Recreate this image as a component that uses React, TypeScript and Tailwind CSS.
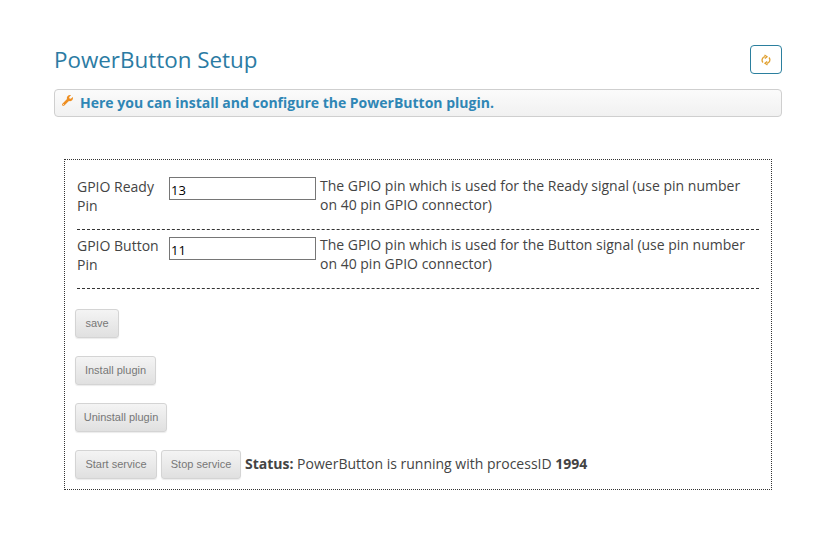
import { FaWrench } from "react-icons/fa";

const btn =
  "h-[29px] rounded-[3px] border border-[#d4d4d4] bg-gradient-to-b from-[#f4f4f4] to-[#e0e0e0] text-center text-[11px] text-[#777] shadow-[0_1px_1px_rgba(0,0,0,0.08)] font-['Liberation_Sans',sans-serif]";

function Row({ label, value, text, first }: { label: string; value: string; text: string; first?: boolean }) {
  return (
    <div className={first ? "flex h-[60px] items-start border-b border-dashed border-[#333] pt-[7px]" : "flex h-[59px] items-start border-b border-dashed border-[#333] pt-[7px]"}>
      <div className={first ? "w-[92px] text-[14px] leading-[19px] text-[#444]" : "-mt-px w-[92px] text-[14px] leading-[19px] text-[#444]"}>{label}</div>
      <input
        readOnly
        value={value}
        className="h-[23px] w-[147px] border border-[#767676] bg-white px-[1px] pt-[2px] text-[13px] text-black outline-none font-['Open_Sans',sans-serif]"
      />
      <div className={first ? "-mt-px ml-[4px] w-[435px] text-[14px] leading-[19px] text-[#444]" : "-mt-[2px] ml-[4px] w-[435px] text-[14px] leading-[19px] text-[#444]"}>{text}</div>
    </div>
  );
}

export default function App() {
  return (
    <div className="h-[539px] w-[838px] bg-white pl-[54px] pr-[56px] pt-[45px] font-['Open_Sans',sans-serif]">
      <div className="flex items-start justify-between">
        <h1 className="text-[22.4px] leading-[30px] text-[#2b7ba3]">PowerButton Setup</h1>
        <button className="flex h-[29px] w-[32px] items-center justify-center rounded-[4px] border border-[#2b7f9e] bg-white">
          <svg viewBox="0 0 12 12" className="h-[12px] w-[12px]" fill="none" stroke="#e0a030" strokeWidth="1.3">
            <path d="M3 8.5 A3.5 3.5 0 0 1 5 2.7" />
            <path d="M4.5 1 L7 2.8 L4.8 4.6" />
            <path d="M9 3.5 A3.5 3.5 0 0 1 7 9.3" />
            <path d="M7.5 11 L5 9.2 L7.2 7.4" />
          </svg>
        </button>
      </div>
      <div className="mt-[14px] flex h-[28px] items-center rounded-[4px] border border-[#cfcfcf] bg-gradient-to-b from-[#fbfbfb] to-[#f1f1f1] pb-[1px] pl-[7px]">
        <FaWrench className="mb-[4px] h-[11px] w-[11px] text-[#ee8f22]" />
        <span className="ml-[7px] text-[14px] font-bold text-[#2f86b5]">Here you can install and configure the PowerButton plugin.</span>
      </div>
      <div className="mx-[10px] mt-[42px] h-[331px] border border-dotted border-[#333] px-[12px] pt-[10px]">
        <Row
          first
          label="GPIO Ready Pin"
          value="13"
          text="The GPIO pin which is used for the Ready signal (use pin number on 40 pin GPIO connector)"
        />
        <Row
          label="GPIO Button Pin"
          value="11"
          text="The GPIO pin which is used for the Button signal (use pin number on 40 pin GPIO connector)"
        />
        <div className="-ml-[2px] mt-[20px] flex flex-col items-start gap-[18px]">
          <button className={`${btn} w-[44px]`}>save</button>
          <button className={`${btn} w-[81px]`}>Install plugin</button>
          <button className={`${btn} w-[92px]`}>Uninstall plugin</button>
          <div className="flex items-center gap-[4px]">
            <button className={`${btn} w-[82px]`}>Start service</button>
            <button className={`${btn} w-[80px]`}>Stop service</button>
            <span className="-mt-[2px] text-[14px] text-[#444]">
              <b>Status:</b> PowerButton is running with processID <b>1994</b>
            </span>
          </div>
        </div>
      </div>
    </div>
  );
}
